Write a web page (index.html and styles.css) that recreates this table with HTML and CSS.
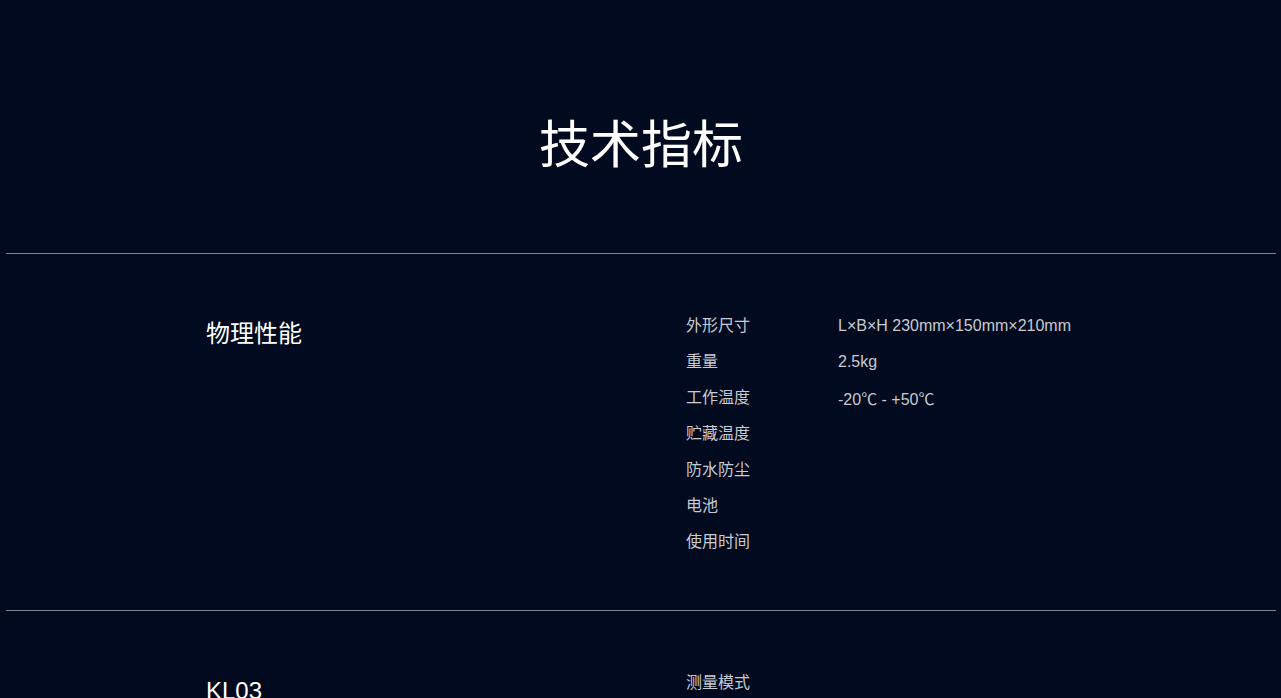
FILE: index.html
```html
<!DOCTYPE html>
<html lang="zh">
<head>
<meta charset="utf-8">
<title>技术指标</title>
<link rel="stylesheet" href="styles.css">
</head>
<body>
<div class="page">
  <header class="hero">
    <h1 class="hero-title">技术指标</h1>
  </header>
  <section class="spec-section">
    <h2 class="spec-name">物理性能</h2>
    <dl class="spec-list">
      <div class="spec-row"><dt>外形尺寸</dt><dd>L×B×H 230mm×150mm×210mm</dd></div>
      <div class="spec-row"><dt>重量</dt><dd>2.5kg</dd></div>
      <div class="spec-row"><dt>工作温度</dt><dd>-20℃ - +50℃</dd></div>
      <div class="spec-row"><dt>贮藏温度</dt><dd></dd></div>
      <div class="spec-row"><dt>防水防尘</dt><dd></dd></div>
      <div class="spec-row"><dt>电池</dt><dd></dd></div>
      <div class="spec-row"><dt>使用时间</dt><dd></dd></div>
    </dl>
  </section>
  <section class="spec-section">
    <h2 class="spec-name">KL03</h2>
    <dl class="spec-list">
      <div class="spec-row"><dt>测量模式</dt><dd></dd></div>
    </dl>
  </section>
</div>
</body>
</html>
```

FILE: styles.css
```css
html, body {
  margin: 0;
  padding: 0;
  background: #010a1e;
  height: 100%;
  overflow: hidden;
}
body {
  font-family: "Liberation Sans", Arial, "Noto Sans CJK SC", sans-serif;
  color: #ffffff;
}
.page {
  margin: 0 5px 0 6px;
}
.hero {
  padding: 111px 0 82px;
  border-bottom: 1px solid #80858f;
}
.hero-title {
  margin: 0;
  font-size: 51px;
  line-height: 60px;
  font-weight: 400;
  text-align: center;
  color: #ffffff;
  font-family: "Noto Sans CJK SC", sans-serif;
}
.spec-section {
  display: flex;
  padding: 54px 0 50px 200px;
  border-bottom: 1px solid #80858f;
}
.spec-name {
  margin: 0;
  width: 480px;
  font-size: 24px;
  line-height: 52px;
  font-weight: 400;
  color: #ffffff;
  font-family: "Liberation Sans", "Noto Sans CJK SC", sans-serif;
}
.spec-list {
  margin: 0;
  display: flex;
  flex-direction: column;
}
.spec-row {
  display: flex;
  height: 36px;
  align-items: center;
  font-size: 16px;
  color: #c9cbd0;
}
.spec-row dt {
  width: 152px;
  margin-bottom: 4px;
  font-family: "Liberation Sans", "Noto Sans CJK SC", sans-serif;
}
.spec-row dd {
  margin: 0;
  font-family: "Liberation Sans", "Noto Sans CJK SC", sans-serif;
}
```
